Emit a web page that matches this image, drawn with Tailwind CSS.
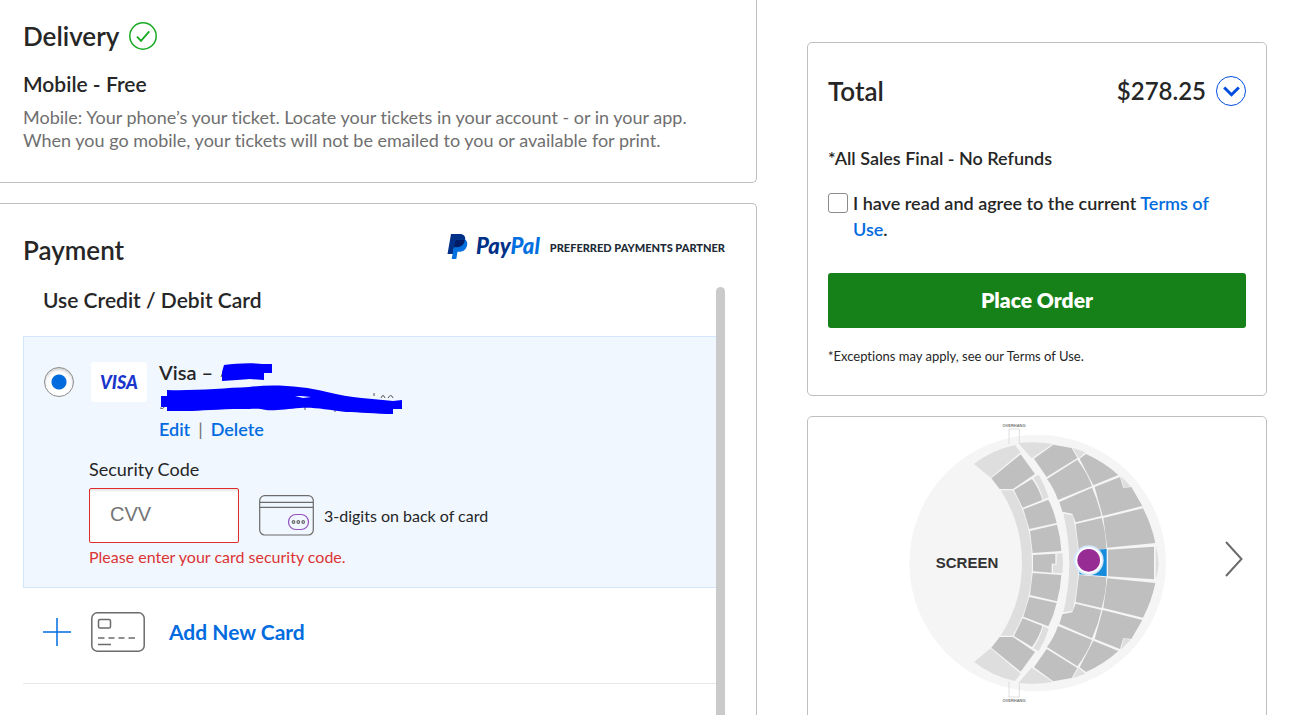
<!DOCTYPE html>
<html lang="en">
<head>
<meta charset="utf-8">
<meta name="viewport" content="width=device-width, initial-scale=1">
<title>Checkout</title>
<script src="https://cdn.jsdelivr.net/npm/@tailwindcss/browser@4"></script>
</head>
<body class="bg-white font-['Lato','Liberation_Sans',sans-serif] text-[#262626] [font-variant-ligatures:none]">
<div class="flex h-screen items-stretch gap-[50px] overflow-hidden pr-6">
  <main class="flex min-w-0 flex-1 flex-col gap-5">
    <section class="rounded-br-[5px] border-r border-b border-[#bfbfbf] pt-5 pr-5 pb-[30px] pl-[23px]">
      <div class="flex items-center gap-2.5">
        <h2 class="text-[26px] leading-8 font-semibold">Delivery</h2>
        <svg class="size-7" viewBox="0 0 28 28" fill="none" stroke="#16a922"><circle cx="14" cy="14" r="13.2" stroke-width="1.5"/><path d="M8 14.6l4 4.3 8.3-9.6" stroke-width="1.8"/></svg>
      </div>
      <h3 class="mt-5 text-[21px] leading-6 font-semibold">Mobile - Free</h3>
      <p class="mt-2.5 text-[18px] leading-[23px] text-[#6f6f6f]">Mobile: Your phone’s your ticket. Locate your tickets in your account - or in your app.<br>When you go mobile, your tickets will not be emailed to you or available for print.</p>
    </section>

    <section class="flex min-h-0 flex-1 flex-col rounded-tr-[5px] border-t border-r border-[#bfbfbf] pt-[26px] pr-[31px] pl-[23px]">
      <div class="flex h-10 shrink-0 items-center justify-between">
        <h2 class="text-[26px] leading-8 font-semibold">Payment</h2>
        <div class="flex items-center pb-2">
          <svg class="h-[26px] w-[21px]" viewBox="0 0 21 26"><path d="M4 1h8.5c4.5 0 6.4 2.600 5.600 6.400C17.200 12 14 14.200 9.800 14.200H7.200L5.900 21H.500z" fill="#003087"/><path d="M17.900 6.500c2 1.300 2.700 3.300 2.200 5.800-.900 4.500-4 6.500-7.900 6.500h-1.700L9.300 26H4.700L7.600 9.500c.3-2 1.300-3 3.200-3z" fill="#0070e0"/><path d="M17.900 6.500c-.4 5-3.600 7.700-8.100 7.700H6.800l.8-4.700c.3-2 1.300-3 3.200-3z" fill="#001c64"/></svg>
          <span class="ml-2 text-[22px] leading-6 font-black text-[#003087] italic">Pay<span class="text-[#0070e0]">Pal</span></span>
          <span class="ml-2.5 pt-1 text-[11px] leading-4 font-black text-[#202a36]">PREFERRED PAYMENTS PARTNER</span>
        </div>
      </div>
      <div class="relative mt-[17px] min-h-0 flex-1 overflow-hidden">
        <h3 class="pt-px pl-5 text-[21px] leading-6 font-semibold">Use Credit / Debit Card</h3>
        <div class="mt-6 border border-r-0 border-[#d3e6fb] bg-[#f0f7ff] pt-[23px] pb-5 pl-5">
          <div class="flex items-start">
            <input id="visa" type="radio" name="card" checked class="mt-[7px] size-[30px] appearance-none rounded-full border border-[#8c8c8c] bg-[radial-gradient(circle,#026cdf_7px,#ffffff_8px)] shadow-[inset_0_2px_3px_#d0d0d0]">
            <label for="visa" class="mt-[2px] ml-[17px] flex h-10 w-14 items-center justify-center rounded-[3px] bg-white text-[18px] leading-5 font-black text-[#1a35cc] italic">VISA</label>
            <div class="relative ml-3">
              <p class="text-[20px] leading-6 font-semibold">Visa –</p>
              <p class="mt-[33px] text-[18px] leading-6 font-semibold"><a href="#edit" class="text-[#026cdf]">Edit</a><span class="mx-2 font-normal text-[#6f6f6f]">|</span><a href="#delete" class="text-[#026cdf]">Delete</a></p>
              <svg class="absolute top-0 left-0 h-[56px] w-[246px]" viewBox="0 0 246 56">
                <path d="M62 17l2-5M1 48q3 2 5-2M146 45v5M176 46v6M215 36v-3M222 38q2-5 4 0M229 38q3-5 5 0" fill="none" stroke="#555"/>
                <path d="M65 5C75 4 84 3 97 3.500L103 4h10v9h-8v7l-14-1-13 1-15 1V12z" fill="#00f"/>
                <path fill-rule="evenodd" d="M8 30C35 31 65 28 90 27 114 24 144 26 168 32 192 38 214 39 234 41l9-1v9h-9v5C217 54 199 52 187 52c-19-2-31-5-46-4-12 1-27 3-34 2-7-2-14-1-23-1-26 0-41 2-58 2H8v-4H2V36h6zM136 36l8 2 8-1-10-1z" fill="#00f"/>
              </svg>
            </div>
          </div>
          <div class="mt-4 pl-[45px]">
            <label for="cvv" class="block text-[18px] leading-6">Security Code</label>
            <div class="mt-[7px] flex items-center">
              <input id="cvv" type="text" placeholder="CVV" class="h-[55px] w-[150px] rounded-[2px] border border-[#de2c2c] bg-white px-5 pb-0.5 font-['Liberation_Sans',sans-serif] text-[20px] shadow-[inset_0_2px_2px_#e8e8e8] outline-none placeholder:text-[#757575]">
              <svg class="ml-5 h-[41px] w-[55px]" viewBox="0 0 55 41" fill="none" stroke="#6b6b6b" stroke-width="1.200"><rect x=".7" y=".7" width="53.600" height="39.300" rx="5"/><path d="M1 7.300h53M1 12.300h53"/><rect x="29.500" y="19.500" width="20" height="15" rx="7.500" stroke="#9351bd"/><circle cx="34.500" cy="27" r="1.300"/><circle cx="39.300" cy="27" r="1.300"/><circle cx="44.200" cy="27" r="1.300"/></svg>
              <span class="ml-2.5 text-[16px] leading-5">3-digits on back of card</span>
            </div>
            <p class="mt-1 text-[16px] leading-5 text-[#dc3434]">Please enter your card security code.</p>
          </div>
        </div>
        <a href="#add-card" class="flex h-24 items-center border-b border-[#e8e8e8] pb-2 pl-5 text-[21px] font-bold text-[#026cdf]">
          <svg class="size-[28px]" viewBox="0 0 28 28" stroke="#026cdf" stroke-width="1.500"><path d="M14 0v28M0 14h28"/></svg>
          <svg class="ml-5 h-10 w-[54px]" viewBox="0 0 54 40" fill="none" stroke="#6b6b6b" stroke-width="1.500"><rect x=".8" y=".8" width="52.400" height="38.400" rx="5.500"/><rect x="7.500" y="7.500" width="12" height="8.500" rx="1.500"/><path d="M7 26h6.500M17.500 26h6M27.500 26h6M37.500 26h6.500M7 32.500h13"/></svg>
          <span class="ml-6">Add New Card</span>
        </a>
        <div class="absolute top-0 right-0 h-full w-[9px] rounded-t-full bg-[#cacaca]"></div>
      </div>
    </section>
  </main>

  <aside class="flex w-[460px] shrink-0 flex-col gap-5 pt-[42px]">
    <section class="rounded-[5px] border border-[#bfbfbf] px-5 pt-8 pb-[29px]">
      <div class="flex items-center text-[26px] leading-8 font-semibold">
        <h2>Total</h2>
        <span class="ml-auto text-[24px]">$278.25</span>
        <button type="button" aria-label="Show price details" class="ml-2.5 flex size-[30px] items-center justify-center rounded-full border border-[#024ddf]"><svg class="h-[11px] w-[17px]" viewBox="0 0 17 11" fill="none" stroke="#024ddf" stroke-width="3"><path d="M1.200 1.500l7.300 7.200 7.300-7.200"/></svg></button>
      </div>
      <p class="mt-[38px] text-[18px] leading-[26px] font-semibold">*All Sales Final - No Refunds</p>
      <div class="mt-[19px] flex items-start gap-[5px]">
        <input id="agree" type="checkbox" class="mt-[3px] size-5 shrink-0 appearance-none rounded-[3px] border border-[#8c8c8c] bg-white">
        <label for="agree" class="text-[18px] leading-[26px] font-semibold">I have read and agree to the current <a href="#terms" class="text-[#026cdf]">Terms of<br>Use</a>.</label>
      </div>
      <button type="button" class="mt-[31px] h-[55px] w-full rounded-[3px] bg-[#168118] pb-0.5 text-[21px] font-extrabold text-white">Place Order</button>
      <p class="mt-[18px] text-[13px] leading-5">*Exceptions may apply, see our Terms of Use.</p>
    </section>

    <section class="flex h-[400px] shrink-0 items-start rounded-[5px] border border-[#bfbfbf] pr-[18px] pl-[92px]">
      <svg class="-mt-0.5 h-[296px] w-[280px]" viewBox="0 0 840 888">
        <circle cx="413" cy="444" r="385" fill="#f5f5f5"/>
        <defs>
          <g id="half">
            <g fill="#dedede">
              <path d="M222 147Q275 105 345 90L362 112 272 188z"/>
              <path d="M302 226h36Q396 320 396 444H366Q366 325 302 226z"/>
              <path d="M400 188l16-9q20 34 30 68l-16 7q-10-36-30-66z"/>
              <path d="M355 84Q410 78 458 87L395 130z"/>
              <path d="M518 98l38 14-20 18z"/>
              <path d="M662 183l30 31-20 4z"/>
              <path d="M490 296l28 5q16 70 18 143H508q-1-80-18-148z"/>
              <path d="M767 392q7 25 9 52h-9z"/>
            </g>
            <g fill="#bfbfbf">
              <path d="M362 118l43 59-66 45H299l-25-32z"/>
              <path d="M342 225l54-33q22 30 31 63l-59 23z"/>
              <path d="M370 283l75-29q17 33 25 70l-82 18z"/>
              <path d="M390 348l81-19q11 38 13 79l-86 6z"/>
              <path d="M402 131l58-42 55 10 17 30-92 57z"/>
              <path d="M441 192l91-58q29 38 44 79l-102 42q-12-35-33-63z"/>
              <path d="M539 131l19-14q54 24 97 63l-75 31z"/>
              <path d="M584 216l76-30 10 33 24-3 33 57-119 30z"/>
              <path d="M478 261l98-43q19 42 28 85l-77 19-10-26-30-6z"/>
              <path d="M610 309l119-29q26 50 37 104l-144 14z"/>
              <path d="M527 327l78-18q13 45 14 92l-82 7z"/>
              <path d="M624 404l138-9v49H624z"/>
            </g>
          </g>
        </defs>
        <use href="#half"/>
        <use href="#half" transform="translate(0 888) scale(1 -1)"/>
        <path d="M399 420l67-4v30h-11v27l-56-4z" fill="#bfbfbf"/>
        <path d="M470 416l17-2q4 30 0 61l-28-2v-24h11z" fill="#dedede"/>
        <path d="M538 408l82-6v82l-82-6z" fill="#148bdb"/>
        <g fill="none" stroke="#d8d8d8" stroke-width="2.500"><path d="M327 88V42h31v42M327 800v46h31v-42"/></g>
        <g font-family="Liberation Sans, sans-serif" font-weight="bold" text-anchor="middle">
          <text x="342" y="37" font-size="12" fill="#777">OVERHANG</text>
          <text x="342" y="862" font-size="12" fill="#777">OVERHANG</text>
          <text x="201" y="460" font-size="45" fill="#333">SCREEN</text>
        </g>
        <circle cx="566" cy="436" r="45" fill="#d3e6fb"/><circle cx="566" cy="436" r="40" fill="#fff"/><circle cx="566" cy="436" r="34" fill="#962c94"/>
      </svg>
      <button type="button" aria-label="Next image" class="mt-[122px] ml-auto flex h-10 w-7 items-center justify-center"><svg class="h-9 w-[18px]" viewBox="0 0 18 36" fill="none" stroke="#6b6b6b" stroke-width="2"><path d="M1 1l15.500 17L1 35"/></svg></button>
    </section>
  </aside>
</div>
</body>
</html>
